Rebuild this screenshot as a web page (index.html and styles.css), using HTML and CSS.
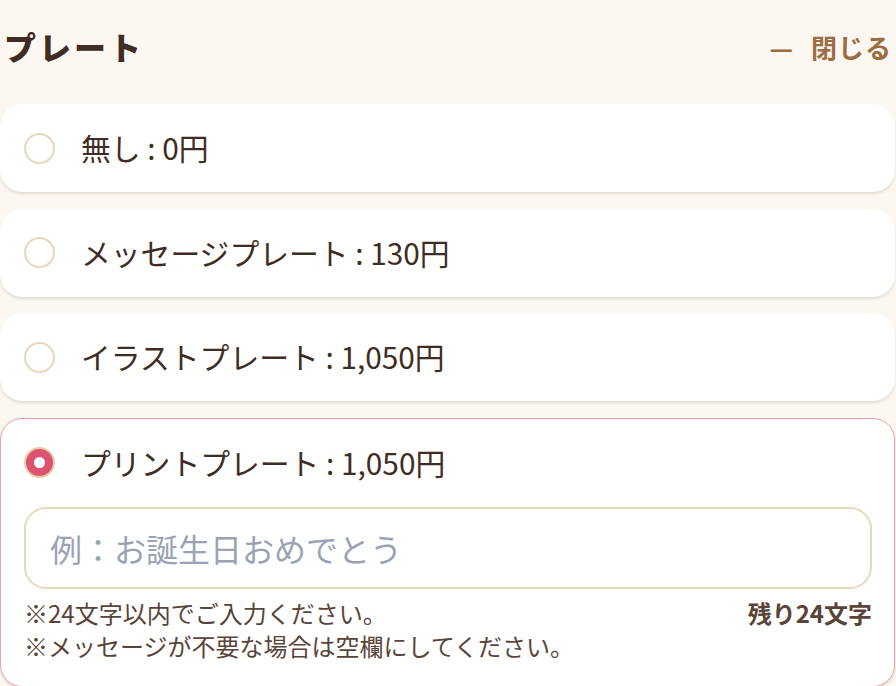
FILE: index.html
```html
<!DOCTYPE html>
<html lang="ja">
<head>
<meta charset="utf-8">
<title>プレート</title>
<link rel="stylesheet" href="styles.css">
</head>
<body>
<div class="panel">
  <div class="header">
    <h2 class="title">プレート</h2>
    <button class="close"><span class="dash">—</span>閉じる</button>
  </div>
  <div class="options">
    <label class="option">
      <span class="radio"></span>
      <span class="label">無し : 0円</span>
    </label>
    <label class="option">
      <span class="radio"></span>
      <span class="label">メッセージプレート : 130円</span>
    </label>
    <label class="option">
      <span class="radio"></span>
      <span class="label">イラストプレート : 1,050円</span>
    </label>
    <div class="option option-selected">
      <div class="option-row">
        <span class="radio radio-checked"></span>
        <span class="label">プリントプレート : 1,050円</span>
      </div>
      <input class="message" type="text" placeholder="例：お誕生日おめでとう">
      <div class="notes">
        <div class="note-lines">
          <p class="note">※24文字以内でご入力ください。</p>
          <p class="note">※メッセージが不要な場合は空欄にしてください。</p>
        </div>
        <span class="remaining">残り24文字</span>
      </div>
    </div>
  </div>
</div>
</body>
</html>
```

FILE: styles.css
```css
html, body {
  margin: 0;
  padding: 0;
  background: #fcf8f1;
}

body {
  font-family: "Noto Sans CJK JP", "Noto Sans", sans-serif;
  color: #3f2c22;
  width: 896px;
  height: 686px;
  overflow: hidden;
}

.panel {
  width: 895px;
}

.header {
  display: flex;
  justify-content: space-between;
  align-items: center;
  height: 92px;
  padding: 0 3px 0 4px;
  margin-bottom: 12px;
}

.title {
  margin: 0;
  font-size: 32px;
  font-weight: 900;
  letter-spacing: 3px;
  color: #3f2c22;
}

.close {
  background: none;
  border: none;
  padding: 0;
  font-family: inherit;
  font-size: 26px;
  font-weight: 700;
  color: #9b6d43;
  letter-spacing: 1px;
  display: flex;
  align-items: center;
}

.dash {
  margin-right: 17px;
  font-weight: 700;
}

.options {
  display: flex;
  flex-direction: column;
  gap: 16.5px;
}

.option {
  background: #fff;
  border-radius: 22px;
  height: 88px;
  display: flex;
  align-items: center;
  gap: 26px;
  padding-left: 24px;
  box-shadow: 0 2px 3px rgba(80, 55, 30, 0.14);
  box-sizing: border-box;
}

.radio {
  width: 31px;
  height: 31px;
  border-radius: 50%;
  border: 2px solid #ead7b8;
  box-sizing: border-box;
  background: #fff;
  flex: none;
}

.radio-checked {
  background: #dc5270;
  border-color: #e6cfa8;
  display: flex;
  align-items: center;
  justify-content: center;
}

.radio-checked::after {
  content: "";
  width: 11px;
  height: 11px;
  border-radius: 50%;
  background: #fff;
}

.label {
  font-size: 29.8px;
  line-height: 1;
}

.option-selected {
  height: auto;
  display: block;
  border: 1.5px solid #e9a0b1;
  padding: 0 22px 24px 23px;
}

.option-row {
  display: flex;
  align-items: center;
  gap: 26px;
  height: 88px;
}

.message {
  display: block;
  width: 100%;
  height: 82px;
  box-sizing: border-box;
  border: 2px solid #ead7b8;
  border-radius: 22px;
  padding: 0 24px;
  font-family: inherit;
  font-size: 32px;
  color: #3f2c22;
  background: #fff;
  outline: none;
}

.message::placeholder {
  color: #9aa3b5;
}

.notes {
  display: flex;
  justify-content: space-between;
  align-items: flex-start;
  margin-top: 7px;
}

.note {
  margin: 0;
  font-size: 24px;
  line-height: 33px;
  color: #5a4438;
}

.remaining {
  font-size: 24px;
  font-weight: 700;
  line-height: 33px;
  color: #5a4438;
}
```
